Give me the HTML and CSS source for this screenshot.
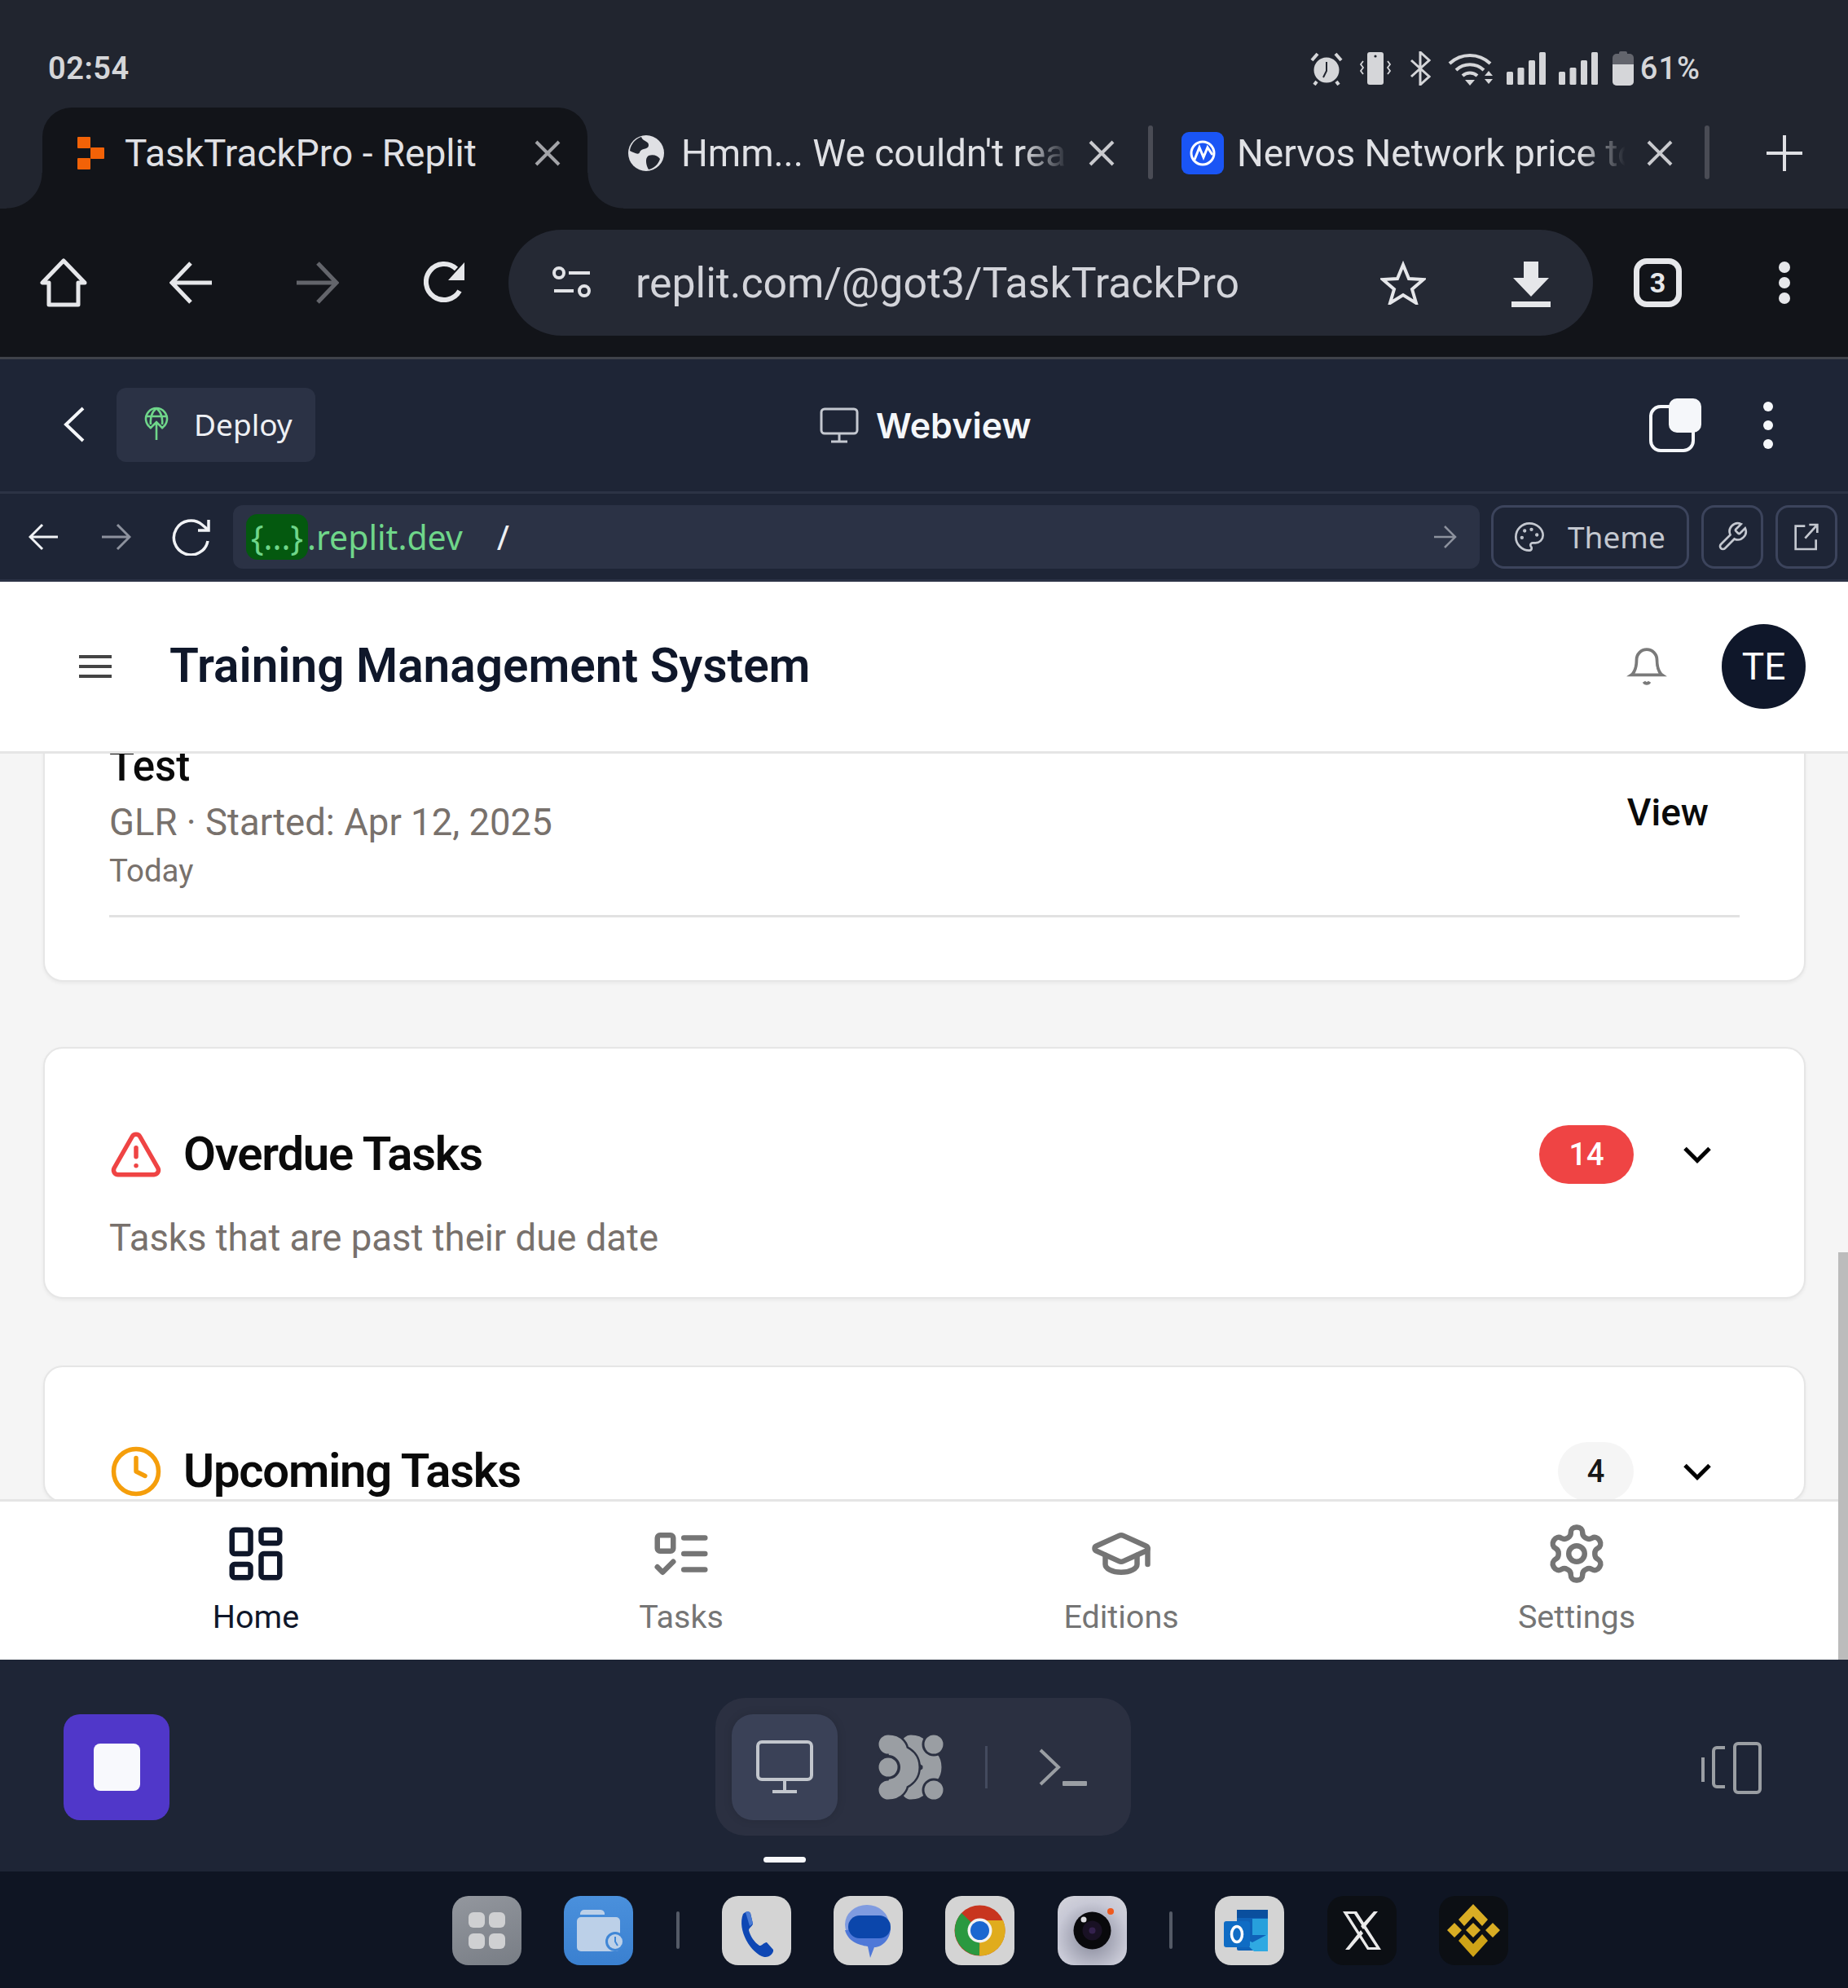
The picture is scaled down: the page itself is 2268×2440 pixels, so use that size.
FILE: index.html
```html
<!DOCTYPE html>
<html lang="en">
<head>
    <meta charset="UTF-8">
    <title>TaskTrackPro - Replit</title>
    <link rel="stylesheet" href="styles.css">
</head>
<body>
<div class="screen">

    <!-- phone status bar -->
    <div class="statusbar">
        <span class="time">02:54</span>
        <div class="status-icons">
            <svg class="st-alarm" viewBox="0 0 40 42"><circle cx="20" cy="23" r="15.500" fill="#d5d6d9"/><path d="M2 11 9 3M38 11 31 3M8 37l-3 4M32 37l3 4" stroke="#d5d6d9" stroke-width="4" fill="none"/><path d="M20 13v11l-4 8" stroke="#21252f" stroke-width="2" fill="none"/></svg>
            <svg class="st-vib" viewBox="0 0 40 42"><rect x="10" y="1" width="20" height="40" rx="3" fill="#d5d6d9"/><circle cx="20" cy="6" r="1.600" fill="#21252f"/><path d="M5 12l-3 4 3 4-3 4 3 4M35 12l3 4-3 4 3 4-3 4" stroke="#d5d6d9" stroke-width="1.800" fill="none"/></svg>
            <svg class="st-bt" viewBox="0 0 26 42"><path d="M2 11l22 20-11 10V1l11 10L2 31" stroke="#d5d6d9" stroke-width="3" fill="none"/></svg>
            <svg class="st-wifi" viewBox="0 0 56 42"><path d="M2 15a36 36 0 0 1 50 0M10 23a25 25 0 0 1 34 0M18 30a13 13 0 0 1 18 0" stroke="#d5d6d9" stroke-width="4" fill="none"/><path d="M21 35h12l-6 7z" fill="#d5d6d9"/><path d="M50 24l5 6H45zM45 34h10l-5 6z" fill="#d5d6d9"/></svg>
            <svg class="st-sig" viewBox="0 0 48 40"><g fill="#d5d6d9"><rect x="0" y="24" width="8" height="16" rx="1.500"/><rect x="13.500" y="19" width="8" height="21" rx="1.500"/><rect x="27" y="10" width="8" height="30" rx="1.500"/><rect x="40" y="0" width="8" height="40" rx="1.500"/></g></svg>
            <svg class="st-sig" viewBox="0 0 48 40"><g fill="#d5d6d9"><rect x="0" y="24" width="8" height="16" rx="1.500"/><rect x="13.500" y="19" width="8" height="21" rx="1.500"/><rect x="27" y="10" width="8" height="30" rx="1.500"/><rect x="40" y="0" width="8" height="40" rx="1.500"/></g></svg>
            <svg class="st-batt" viewBox="0 0 26 42"><rect x="0" y="3" width="26" height="39" rx="5" fill="#63656d"/><rect x="8" y="0" width="10" height="5" rx="2" fill="#63656d"/><path d="M0 16h26v21a5 5 0 0 1-5 5H5a5 5 0 0 1-5-5z" fill="#d5d6d9"/></svg>
            <span class="batt-text">61%</span>
        </div>
    </div>

    <!-- chrome tabs -->
    <div class="tabstrip">
        <div class="tab tab-active">
            <svg class="fav-replit" viewBox="0 0 33 40"><g fill="#f26207"><rect x="0" y="0" width="16" height="14" rx="1"/><rect x="16" y="13" width="17" height="14" rx="1"/><rect x="0" y="26" width="16" height="14" rx="1"/></g></svg>
            <span class="tab-title">TaskTrackPro - Replit</span>
            <svg class="tab-x" viewBox="0 0 34 34"><path d="M3 3l28 28M31 3 3 31" stroke="#a3a4a8" stroke-width="4"/></svg>
        </div>
        <div class="tab tab-two">
            <svg class="fav-globe" viewBox="0 0 44 44"><circle cx="22" cy="22" r="22" fill="#dfe0e4"/><path d="M16 2c2 6 10 5 9 11-1 5-9 2-11 8-1 4-8 0-12-2 1-8 7-15 14-17zM25 25c6-2 11 0 14 4-2 7-8 12-14 13-3-5-5-14 0-17z" fill="#21252f"/></svg>
            <span class="tab-title tab-fade">Hmm... We couldn't reach this page</span>
            <svg class="tab-x" viewBox="0 0 34 34"><path d="M3 3l28 28M31 3 3 31" stroke="#c9cace" stroke-width="4"/></svg>
        </div>
        <i class="tab-sep"></i>
        <div class="tab tab-three">
            <svg class="fav-cmc" viewBox="0 0 52 52"><rect width="52" height="52" rx="9" fill="#1a55f5"/><circle cx="26" cy="26" r="14" fill="none" stroke="#fff" stroke-width="3"/><path d="M16 34l6-15 5 12 5-12 6 9" fill="none" stroke="#fff" stroke-width="3"/></svg>
            <span class="tab-title tab-fade">Nervos Network price today</span>
            <svg class="tab-x" viewBox="0 0 34 34"><path d="M3 3l28 28M31 3 3 31" stroke="#c9cace" stroke-width="4"/></svg>
        </div>
        <i class="tab-sep"></i>
        <svg class="tab-plus" viewBox="0 0 44 44"><path d="M22 0v44M0 22h44" stroke="#dfe0e4" stroke-width="4"/></svg>
    </div>

    <!-- chrome toolbar -->
    <div class="toolbar">
        <svg class="tb-home" viewBox="0 0 60 60"><path d="M30 3 4 30h8v27h36V30h8z" fill="none" stroke="#e6e7ea" stroke-width="5" stroke-linejoin="round"/></svg>
        <svg class="tb-arrow" viewBox="0 0 52 52"><path d="M52 26H4M26 2 3 26l23 24" fill="none" stroke="#e6e7ea" stroke-width="5"/></svg>
        <svg class="tb-arrow tb-fwd" viewBox="0 0 52 52"><path d="M0 26h48M26 2l23 24-23 24" fill="none" stroke="#63656b" stroke-width="5"/></svg>
        <svg class="tb-reload" viewBox="0 0 52 52"><path d="M44 36A22 22 0 1 1 40 9" fill="none" stroke="#e6e7ea" stroke-width="6"/><path d="M50 1v22H30z" fill="#e6e7ea"/></svg>
        <div class="urlpill">
            <svg class="tune" viewBox="0 0 48 42"><g fill="none" stroke="#e2e3e7" stroke-width="4"><circle cx="8" cy="9" r="6"/><path d="M20 9h26M2 31h24"/><circle cx="39" cy="31" r="6"/></g></svg>
            <span class="urltext">replit.com/@got3/TaskTrackPro</span>
            <svg class="star" viewBox="0 0 56 54"><path d="M28 5l7 17 18 1-14 12 5 17-16-10-16 10 5-17L3 23l18-1z" fill="none" stroke="#e6e7ea" stroke-width="4"/></svg>
            <svg class="dl" viewBox="0 0 48 56"><path d="M15 0h18v20h13L24 43 2 20h13z" fill="#e6e7ea"/><rect y="49" width="48" height="7" fill="#e6e7ea"/></svg>
        </div>
        <div class="tabcount">3</div>
        <svg class="tb-kebab" viewBox="0 0 16 52"><g fill="#e6e7ea"><circle cx="8" cy="7" r="7"/><circle cx="8" cy="26" r="7"/><circle cx="8" cy="45" r="7"/></g></svg>
    </div>

    <!-- replit mobile header -->
    <div class="replit-head">
        <svg class="rh-back" viewBox="0 0 26 44"><path d="M24 2 3 22l21 20" fill="none" stroke="#f5f7fa" stroke-width="4"/></svg>
        <div class="deploy">
            <svg class="deploy-ico" viewBox="0 0 30 42"><g fill="none" stroke="#6fd68a" stroke-width="2.600"><path d="M8 26a13 13 0 1 1 14 0"/><path d="M2 12h26M15 2c-6 5-8 11-7 20M15 2c6 5 8 11 7 20M15 41V19M7 27l8-8 8 8"/></g></svg>
            <span>Deploy</span>
        </div>
        <div class="rh-center">
            <svg class="rh-monitor" viewBox="0 0 48 44"><rect x="2" y="2" width="44" height="30" rx="4" fill="none" stroke="#c4c8d0" stroke-width="3"/><path d="M24 32v9M14 42h20" stroke="#c4c8d0" stroke-width="3"/></svg>
            <span>Webview</span>
        </div>
        <svg class="rh-copy" viewBox="0 0 64 66"><rect x="2" y="10" width="52" height="54" rx="12" fill="none" stroke="#f5f7fa" stroke-width="4"/><rect x="24" y="0" width="40" height="42" rx="10" fill="#f5f7fa"/></svg>
        <svg class="rh-kebab" viewBox="0 0 14 58"><g fill="#f5f7fa"><circle cx="7" cy="6" r="6"/><circle cx="7" cy="29" r="6"/><circle cx="7" cy="52" r="6"/></g></svg>
    </div>

    <!-- webview url bar -->
    <div class="webbar">
        <svg class="wb-arrow" viewBox="0 0 36 36"><path d="M36 18H3M17 3 2 18l15 15" fill="none" stroke="#f1f3f6" stroke-width="3"/></svg>
        <svg class="wb-arrow wb-fwd" viewBox="0 0 36 36"><path d="M0 18h33M19 3l15 15-15 15" fill="none" stroke="#8d929e" stroke-width="3"/></svg>
        <svg class="wb-reload" viewBox="0 0 48 46"><path d="M44 28A21 21 0 1 1 37 8l7 6" fill="none" stroke="#f1f3f6" stroke-width="3.500"/><path d="M45 2v13H32" fill="none" stroke="#f1f3f6" stroke-width="3.500"/></svg>
        <div class="wb-url">
            <span class="wb-slug">{...}</span><span class="wb-host">.replit.dev</span>
            <span class="wb-slash">/</span>
            <svg class="wb-go" viewBox="0 0 28 32"><path d="M0 16h25M13 3l13 13-13 13" fill="none" stroke="#8d929e" stroke-width="2.500"/></svg>
        </div>
        <div class="wb-btn wb-theme">
            <svg class="wb-ico" viewBox="0 0 24 24" fill="none" stroke="#c4c8d0" stroke-width="1.600"><circle cx="13.500" cy="6.500" r=".5" fill="#c4c8d0"/><circle cx="17.500" cy="10.500" r=".5" fill="#c4c8d0"/><circle cx="8.500" cy="7.500" r=".5" fill="#c4c8d0"/><circle cx="6.500" cy="12.500" r=".5" fill="#c4c8d0"/><path d="M12 2C6.500 2 2 6.500 2 12s4.500 10 10 10c.926 0 1.648-.746 1.648-1.688 0-.437-.18-.835-.437-1.125-.29-.289-.438-.652-.438-1.125a1.64 1.64 0 0 1 1.668-1.668h1.996c3.051 0 5.555-2.503 5.555-5.554C21.965 6.012 17.461 2 12 2z"/></svg>
            <span>Theme</span>
        </div>
        <div class="wb-btn wb-square">
            <svg class="wb-ico" viewBox="0 0 24 24" fill="none" stroke="#c4c8d0" stroke-width="1.600"><path d="M14.700 6.300a1 1 0 0 0 0 1.400l1.600 1.600a1 1 0 0 0 1.400 0l3.770-3.770a6 6 0 0 1-7.940 7.940l-6.910 6.910a2.120 2.120 0 0 1-3-3l6.910-6.910a6 6 0 0 1 7.940-7.940l-3.760 3.760z"/></svg>
        </div>
        <div class="wb-btn wb-square">
            <svg class="wb-ico" viewBox="0 0 24 24" fill="none" stroke="#c4c8d0" stroke-width="1.600"><path d="M11 4H4v17h15v-7M20 3 11 13M14 3h6v6"/></svg>
        </div>
    </div>

    <!-- the app in the webview -->
    <div class="app">
        <header class="app-head">
            <svg class="menu" viewBox="0 0 40 30"><path d="M0 3h40M0 15h40M0 27h40" stroke="#444" stroke-width="4"/></svg>
            <h1>Training Management System</h1>
            <svg class="bell" viewBox="0 0 24 24" fill="none" stroke="#7a7a7a" stroke-width="1.800"><path d="M6 8a6 6 0 0 1 12 0c0 7 3 9 3 9H3s3-2 3-9"/><path d="M10.300 21a1.940 1.940 0 0 0 3.400 0"/></svg>
            <div class="avatar">TE</div>
        </header>

        <main class="scroller">
            <div class="scroll-inner">
                <section class="card card-recent">
                    <div class="recent-row">
                        <div>
                            <div class="recent-name">Test</div>
                            <div class="recent-meta">GLR · Started: Apr 12, 2025</div>
                            <div class="recent-date">Today</div>
                        </div>
                        <span class="view-link">View</span>
                    </div>
                </section>

                <section class="card card-overdue">
                    <div class="card-top">
                        <svg class="card-ico" viewBox="0 0 24 24" fill="none" stroke="#ef4444" stroke-width="2" stroke-linecap="round" stroke-linejoin="round"><path d="m21.730 18-8-14a2 2 0 0 0-3.480 0l-8 14A2 2 0 0 0 4 21h16a2 2 0 0 0 1.730-3"/><path d="M12 9v4"/><path d="M12 17h.01"/></svg>
                        <h2>Overdue Tasks</h2>
                        <span class="badge badge-red">14</span>
                        <svg class="chev" viewBox="0 0 24 24" fill="none" stroke="#000" stroke-width="2"><path d="m6 9 6 6 6-6"/></svg>
                    </div>
                    <p class="card-sub">Tasks that are past their due date</p>
                </section>

                <section class="card">
                    <div class="card-top">
                        <svg class="card-ico" viewBox="0 0 24 24" fill="none" stroke="#f59e0b" stroke-width="2" stroke-linecap="round" stroke-linejoin="round"><circle cx="12" cy="12" r="10"/><polyline points="12 6 12 12 16 14"/></svg>
                        <h2>Upcoming Tasks</h2>
                        <span class="badge badge-grey">4</span>
                        <svg class="chev" viewBox="0 0 24 24" fill="none" stroke="#000" stroke-width="2"><path d="m6 9 6 6 6-6"/></svg>
                    </div>
                </section>
            </div>
        </main>

        <nav class="tabbar">
            <div class="nav-item nav-on">
                <svg viewBox="0 0 24 24" fill="none" stroke="#0f172a" stroke-width="2"><rect x="3" y="3" width="7" height="9" rx="1"/><rect x="14" y="3" width="7" height="5" rx="1"/><rect x="14" y="12" width="7" height="9" rx="1"/><rect x="3" y="16" width="7" height="5" rx="1"/></svg>
                <span>Home</span>
            </div>
            <div class="nav-item">
                <svg viewBox="0 0 24 24" fill="none" stroke="#757575" stroke-width="2" stroke-linecap="round" stroke-linejoin="round"><rect x="3" y="5" width="6" height="6" rx="1"/><path d="m3 17 2 2 4-4"/><path d="M13 6h8"/><path d="M13 12h8"/><path d="M13 18h8"/></svg>
                <span>Tasks</span>
            </div>
            <div class="nav-item">
                <svg viewBox="0 0 24 24" fill="none" stroke="#757575" stroke-width="2" stroke-linecap="round" stroke-linejoin="round"><path d="M21.420 10.922a1 1 0 0 0-.019-1.838L12.830 5.180a2 2 0 0 0-1.660 0L2.600 9.080a1 1 0 0 0 0 1.832l8.570 3.908a2 2 0 0 0 1.660 0z"/><path d="M22 10v6"/><path d="M6 12.500V16a6 3 0 0 0 12 0v-3.500"/></svg>
                <span>Editions</span>
            </div>
            <div class="nav-item">
                <svg viewBox="0 0 24 24" fill="none" stroke="#757575" stroke-width="2" stroke-linecap="round" stroke-linejoin="round"><path d="M12.220 2h-.44a2 2 0 0 0-2 2v.18a2 2 0 0 1-1 1.730l-.43.25a2 2 0 0 1-2 0l-.15-.08a2 2 0 0 0-2.730.73l-.22.38a2 2 0 0 0 .73 2.730l.15.1a2 2 0 0 1 1 1.720v.51a2 2 0 0 1-1 1.740l-.15.09a2 2 0 0 0-.73 2.730l.22.38a2 2 0 0 0 2.730.73l.15-.08a2 2 0 0 1 2 0l.43.25a2 2 0 0 1 1 1.730V20a2 2 0 0 0 2 2h.44a2 2 0 0 0 2-2v-.18a2 2 0 0 1 1-1.730l.43-.25a2 2 0 0 1 2 0l.15.08a2 2 0 0 0 2.730-.73l.22-.39a2 2 0 0 0-.73-2.730l-.15-.08a2 2 0 0 1-1-1.740v-.5a2 2 0 0 1 1-1.740l.15-.09a2 2 0 0 0 .73-2.730l-.22-.38a2 2 0 0 0-2.730-.73l-.15.08a2 2 0 0 1-2 0l-.43-.25a2 2 0 0 1-1-1.730V4a2 2 0 0 0-2-2z"/><circle cx="12" cy="12" r="3"/></svg>
                <span>Settings</span>
            </div>
        </nav>
        <div class="scrollthumb"></div>
    </div>

    <!-- replit bottom bar -->
    <div class="ide-bar">
        <div class="stop"><i></i></div>
        <div class="ide-mid">
            <div class="ide-pill">
                <div class="ide-tab ide-tab-on">
                    <svg class="ide-monitor" viewBox="0 0 70 66"><rect x="2" y="2" width="66" height="46" rx="5" fill="none" stroke="#c2c6cd" stroke-width="4"/><path d="M35 48v14M20 63h30" stroke="#c2c6cd" stroke-width="4"/></svg>
                </div>
                <div class="ide-tab">
                    <svg class="ide-agent" viewBox="0 0 80 80" fill="none" stroke-linecap="round">
                        <path d="M40 12C50 12 52 18 52 22 53 27 66 26 66 40 66 54 53 53 52 58 52 62 50 68 40 68" stroke="#9a9ea3" stroke-width="23"/>
                        <path d="M12 12C22 12 24 18 24 22 25 27 38 26 38 40 38 54 25 53 24 58 24 62 22 68 12 68" stroke="#2b3041" stroke-width="28"/>
                        <path d="M12 12C22 12 24 18 24 22 25 27 38 26 38 40 38 54 25 53 24 58 24 62 22 68 12 68" stroke="#9a9ea3" stroke-width="23"/>
                        <circle cx="12" cy="40" r="15" fill="#2b3041"/>
                        <circle cx="12" cy="40" r="11.500" fill="#9a9ea3"/>
                        <circle cx="68" cy="12" r="14.500" fill="#2b3041"/>
                        <circle cx="68" cy="12" r="11.500" fill="#9a9ea3"/>
                        <circle cx="68" cy="68" r="14.500" fill="#2b3041"/>
                        <circle cx="68" cy="68" r="11.500" fill="#9a9ea3"/>
                    </svg>
                </div>
                <i class="ide-sep"></i>
                <svg class="ide-term" viewBox="0 0 60 46"><path d="M2 2l22 21L2 44" fill="none" stroke="#9a9ea3" stroke-width="4"/><rect x="29" y="40" width="30" height="6" rx="1" fill="#9a9ea3"/></svg>
            </div>
            <div class="ide-indicator"></div>
        </div>
        <svg class="ide-devices" viewBox="0 0 74 64"><path d="M2 19v30" stroke="#9a9ea3" stroke-width="4"/><path d="M29 7H19a4 4 0 0 0-4 4v40a4 4 0 0 0 4 4h10" fill="none" stroke="#9a9ea3" stroke-width="4"/><rect x="41" y="2" width="31" height="60" rx="4" fill="none" stroke="#9a9ea3" stroke-width="4"/></svg>
    </div>

    <!-- samsung dock -->
    <div class="dock">
        <div class="app-ico ico-grid">
            <svg viewBox="0 0 85 85"><g fill="#cfd0d2"><rect x="20" y="20" width="20" height="19" rx="6"/><rect x="45" y="20" width="20" height="19" rx="6"/><rect x="20" y="46" width="20" height="19" rx="6"/><rect x="45" y="46" width="20" height="19" rx="6"/></g></svg>
        </div>
        <div class="app-ico ico-files">
            <svg viewBox="0 0 85 85"><path d="M20 22a5 5 0 0 1 5-5h20a5 5 0 0 1 5 6H20z" fill="#bcd0e8"/><rect x="16" y="26" width="53" height="42" rx="5" fill="#bcd0e8"/><circle cx="63" cy="56" r="12" fill="#3f86d6"/><circle cx="63" cy="56" r="9" fill="#bcd0e8"/><path d="M63 50v6l3 5" stroke="#3f86d6" stroke-width="2" fill="none"/></svg>
        </div>
        <i class="dock-sep"></i>
        <div class="app-ico ico-light">
            <svg viewBox="0 0 85 85"><path d="M26 22c3-3 7-4 9-1l3 13c0 3-5 5-5 8 2 8 7 15 13 19 2 1 7-5 9-4l8 9c1 4-5 10-11 9C36 71 18 42 26 22z" fill="#0e47b4"/><path d="M29 20c3-2 5-1 6 2l3 12-4 3z" fill="#4a7bd4"/></svg>
        </div>
        <div class="app-ico ico-light">
            <svg viewBox="0 0 85 85"><ellipse cx="41" cy="35" rx="27" ry="24" fill="#7f9be0"/><path d="M14 42c4 14 16 18 28 20l3 14 5-13c10 0 20-10 20-24z" fill="#4f78d8"/><rect x="18" y="24" width="52" height="28" rx="14" fill="#0b46ab"/></svg>
        </div>
        <div class="app-ico ico-light">
            <svg viewBox="0 0 85 85"><circle cx="42.500" cy="42.500" r="31" fill="#c8351f"/><path d="M42.500 42.500 20 21a31 31 0 0 0 22 52z" fill="#2a9940"/><path d="M42.500 42.500 42 73.500A31 31 0 0 0 71 30H42z" fill="#e0ac1d"/><circle cx="42.500" cy="42.500" r="15" fill="#f2f2f2"/><circle cx="42.500" cy="42.500" r="11.500" fill="#1a67d0"/></svg>
        </div>
        <div class="app-ico ico-cam">
            <svg viewBox="0 0 85 85"><circle cx="42.500" cy="42.500" r="23" fill="#09090c"/><circle cx="42.500" cy="42.500" r="12" fill="#191124"/><circle cx="42.500" cy="42.500" r="4" fill="#34214d"/><circle cx="32" cy="29" r="3.500" fill="#dcdce0"/><circle cx="65" cy="19" r="4" fill="#ef5a1e"/></svg>
        </div>
        <i class="dock-sep"></i>
        <div class="app-ico ico-light">
            <svg viewBox="0 0 85 85"><rect x="27" y="17" width="38" height="50" rx="2" fill="#0f62b8"/><rect x="46" y="28" width="19" height="20" fill="#27a0dc"/><rect x="27" y="17" width="38" height="10" fill="#0a4f9e"/><path d="M27 48l21 20h17V47L46 57z" fill="#2fa9e2"/><rect x="11" y="31" width="32" height="32" rx="3" fill="#0f6cc4"/><ellipse cx="27" cy="47" rx="6.500" ry="9.500" fill="none" stroke="#fff" stroke-width="3.500"/></svg>
        </div>
        <div class="app-ico ico-dark">
            <svg viewBox="0 0 85 85"><path d="M19 19h17l30 47H49zM25 22l26 41h9L33 22z" fill="#eaeaea" fill-rule="evenodd"/><path d="M62 19h-5L41 37l3 4zM22 66h5l17-20-3-4z" fill="#eaeaea"/></svg>
        </div>
        <div class="app-ico ico-dark">
            <svg viewBox="0 0 85 85"><g fill="#d9ad24"><path d="M42 10l18 19-7 8-11-12-11 12-7-8z"/><path d="M42 33l9 9-9 9-9-9z"/><path d="M19 33l9 9-9 9-9-9zM66 33l9 9-9 9-9-9z"/><path d="M31 47l11 12 11-12 7 8-18 20-18-20z" fill="#cfa317"/></g></svg>
        </div>
    </div>

</div>
</body>
</html>
```

FILE: styles.css
```css
* { box-sizing: border-box; }
html, body { margin: 0; padding: 0; }
body { width: 2268px; height: 2440px; overflow: hidden; font-family: Roboto, "Noto Sans", sans-serif; }
svg { display: block; flex: none; }
h1, h2, p { margin: 0; }

.screen { width: 2268px; height: 2440px; display: flex; flex-direction: column; overflow: hidden; }

/* status bar */
.statusbar { height: 132px; background: #21252f; display: flex; align-items: flex-start; padding: 62px 181px 0 59px; color: #d5d6d9; }
.time { font-size: 38px; font-weight: 600; line-height: 44px; letter-spacing: .5px; }
.status-icons { margin-left: auto; display: flex; align-items: center; height: 44px; }
.st-alarm { width: 40px; height: 42px; }
.st-vib { width: 40px; height: 42px; margin-left: 20px; }
.st-bt { width: 26px; height: 42px; margin-left: 22px; }
.st-wifi { width: 56px; height: 42px; margin-left: 21px; }
.st-sig { width: 48px; height: 40px; margin-left: 16px; }
.st-batt { width: 26px; height: 42px; margin-left: 18px; }
.batt-text { font-size: 38px; font-weight: 500; margin-left: 8px; letter-spacing: 1px; }

/* tabs */
.tabstrip { height: 124px; background: #21252f; display: flex; align-items: flex-start; position: relative; color: #e0e1e5; }
.tab { height: 124px; display: flex; align-items: center; padding-bottom: 12px; font-size: 46px; flex: none; }
.tab-active { width: 669px; margin-left: 52px; padding-left: 43px; background: #121419; border-radius: 36px 36px 0 0; position: relative; }
.tab-active::before, .tab-active::after { content: ""; position: absolute; bottom: 0; width: 44px; height: 44px; }
.tab-active::before { left: -44px; background: radial-gradient(circle at 0 0, #21252f 43px, #121419 44px); }
.tab-active::after { right: -44px; background: radial-gradient(circle at 100% 0, #21252f 43px, #121419 44px); }
.tab-title { white-space: nowrap; overflow: hidden; display: block; line-height: 60px; }
.tab-fade { -webkit-mask-image: linear-gradient(to right, #000 88%, transparent 100%); mask-image: linear-gradient(to right, #000 88%, transparent 100%); }
.fav-replit { width: 33px; height: 40px; margin-right: 25px; }
.tab-active .tab-title { width: 502px; }
.tab-x { width: 34px; height: 34px; }
.tab-two { width: 688px; padding-left: 50px; }
.fav-globe { width: 44px; height: 44px; margin-right: 21px; }
.tab-two .tab-title { width: 475px; margin-right: 24px; }
.tab-three { width: 677px; padding-left: 35px; }
.fav-cmc { width: 52px; height: 52px; margin-right: 16px; }
.tab-three .tab-title { width: 477px; margin-right: 25px; }
.tab-sep { width: 6px; height: 66px; margin-top: 22px; background: #4a4c55; border-radius: 3px; flex: none; }
.tab-plus { width: 44px; height: 44px; margin: 34px 0 0 70px; }

/* toolbar */
.toolbar { height: 185px; background: #121419; border-bottom: 3px solid #3f424a; display: flex; align-items: center; padding: 0 0 0 48px; position: relative; }
.tb-home { width: 60px; height: 60px; }
.tb-arrow { width: 52px; height: 52px; margin-left: 100px; }
.tb-fwd { margin-left: 104px; }
.tb-reload { width: 52px; height: 52px; margin-left: 104px; }
.urlpill { width: 1331px; height: 130px; margin-left: 52px; background: #252934; border-radius: 65px; display: flex; align-items: center; padding-left: 54px; flex: none; }
.tune { width: 48px; height: 42px; }
.urltext { font-size: 51.800px; color: #d3d4da; margin-left: 54px; width: 914px; white-space: nowrap; }
.star { width: 56px; height: 54px; }
.dl { width: 48px; height: 56px; margin-left: 105px; margin-top: 3px; }
.tabcount { width: 59px; height: 60px; margin-left: 50px; border: 7px solid #e6e7ea; border-radius: 16px; color: #e6e7ea; font-size: 34px; font-weight: 700; display: flex; align-items: center; justify-content: center; flex: none; }
.tb-kebab { width: 16px; height: 52px; margin-left: 118px; }

/* replit header */
.replit-head { height: 165px; background: #1e2536; border-bottom: 3px solid #2c3345; display: flex; align-items: center; position: relative; color: #f5f7fa; padding: 0 0 0 78px; }
.rh-back { width: 26px; height: 44px; margin-top: -2px; }
.deploy { width: 244px; height: 91px; margin-left: 39px; margin-top: -2px; background: #2b3245; border-radius: 12px; display: flex; align-items: center; padding-left: 34px; padding-bottom: 2px; font: 400 37px "Noto Sans", sans-serif; color: #eef0f4; flex: none; }
.deploy-ico { width: 30px; height: 42px; margin-right: 31px; }
.rh-center { display: flex; align-items: center; margin-left: 619px; font: 600 43px Inter, sans-serif; }
.rh-monitor { width: 48px; height: 44px; margin-right: 21px; }
.rh-copy { width: 64px; height: 66px; margin-left: 758px; }
.rh-kebab { width: 14px; height: 58px; margin-left: 75px; }

/* webview bar */
.webbar { height: 108px; background: #1e2536; border-bottom: 3px solid #2b3245; display: flex; align-items: center; padding: 0 0 0 35px; }
.wb-arrow { width: 36px; height: 36px; }
.wb-fwd { margin-left: 54px; }
.wb-reload { width: 48px; height: 46px; margin-left: 50px; }
.wb-url { width: 1530px; height: 78px; margin-left: 27px; background: #2b3245; border-radius: 12px; display: flex; align-items: center; padding-left: 16px; font: 400 41px "Noto Sans", sans-serif; color: #6fd68a; flex: none; }
.wb-slug { width: 76px; height: 56px; background: #04590f; border-radius: 14px; display: flex; align-items: center; justify-content: center; }
.wb-host { margin-left: -1px; }
.wb-slash { color: #eef0f4; margin-left: 42px; }
.wb-go { width: 28px; height: 32px; margin-left: auto; margin-right: 28px; }
.wb-btn { height: 78px; margin-left: 15px; border: 3px solid #3c445c; border-radius: 16px; display: flex; align-items: center; justify-content: center; color: #c4c8d0; font: 400 37px "Noto Sans", sans-serif; flex: none; }
.wb-theme { width: 243px; justify-content: flex-start; padding-left: 24px; margin-left: 14px; }
.wb-theme span { margin-left: 27px; }
.wb-square { width: 76px; }
.wb-ico { width: 40px; height: 40px; }

/* app */
.app { height: 1323px; display: flex; flex-direction: column; position: relative; background: #fff; }
.app-head { height: 211px; background: #fff; border-bottom: 3px solid #e5e5e5; display: flex; align-items: center; padding: 0 52px 0 97px; flex: none; position: relative; z-index: 2; }
.menu { width: 40px; height: 30px; }
h1 { font-size: 58.500px; font-weight: 600; color: #0f172a; margin-left: 71px; margin-top: -2px; }
.bell { width: 50px; height: 50px; margin-left: auto; margin-right: 2px; }
.avatar { width: 103px; height: 104px; border-radius: 50%; background: #0f172a; color: #fff; font-size: 46px; display: flex; align-items: center; justify-content: center; margin-left: 65px; }

.scroller { height: 915px; background: #f5f5f5; overflow: hidden; flex: none; }
.scroll-inner { padding: 0 52px 0 53px; margin-top: -60px; }
.card { background: #fff; border: 2px solid #e6e6e6; border-radius: 24px; box-shadow: 0 2px 4px rgba(0,0,0,.05); padding: 0 79px 0 79px; margin-bottom: 82px; }
.card-recent { height: 340px; margin-bottom: 80px; }
.recent-row { display: flex; align-items: center; justify-content: space-between; padding: 44px 38px 26px 0; border-bottom: 3px solid #e2e2e2; height: 259px; }
.recent-name { font-size: 51px; font-weight: 500; color: #0a0a0a; line-height: 60px; margin-top: -3px; margin-bottom: 3px; }
.recent-meta { font-size: 45.500px; color: #78716c; line-height: 60px; margin-top: 9px; }
.recent-date { font-size: 38.400px; color: #78716c; line-height: 50px; margin-top: 4px; }
.view-link { font-size: 46px; font-weight: 500; color: #0a0a0a; margin-top: -14px; }

.card-top { display: flex; align-items: center; height: 72px; margin-top: 92px; }
.card-overdue .card-top { margin-top: 94px; }
.card-ico { width: 66px; height: 66px; }
h2 { font-size: 58px; font-weight: 600; color: #0a0a0a; margin-left: 25px; margin-top: -3px; letter-spacing: -1.200px; }
.badge { height: 72px; border-radius: 36px; margin-left: auto; display: flex; align-items: center; justify-content: center; font-size: 38px; font-weight: 500; }
.badge-red { width: 116px; background: #ef4444; color: #fff; }
.badge-grey { width: 93px; background: #f5f5f5; color: #171717; }
.chev { width: 60px; height: 60px; margin-left: 48px; margin-right: 22px; }
.card-sub { font-size: 45.500px; color: #78716c; margin-top: 37px; line-height: 60px; padding-bottom: 42px; }

.tabbar { height: 197px; background: #fff; border-top: 3px solid #e5e5e5; display: grid; grid-template-columns: 628px 416px 664px 454px; flex: none; position: relative; z-index: 2; }
.nav-item { display: flex; flex-direction: column; align-items: center; padding-top: 25px; color: #757575; font-size: 39.500px; }
.nav-item svg { width: 78px; height: 78px; }
.nav-item span { line-height: 48px; margin-top: 15px; }
.nav-on { color: #0f172a; }
.scrollthumb { position: absolute; right: 0; bottom: 0; width: 12px; height: 500px; background: #bcbcbc; z-index: 3; }

/* replit bottom bar */
.ide-bar { height: 260px; background: #1e2536; display: flex; align-items: flex-start; padding: 67px 0 0 78px; }
.stop { width: 130px; height: 130px; background: #5037c9; border-radius: 20px; display: flex; align-items: center; justify-content: center; flex: none; }
.stop i { width: 57px; height: 58px; background: #f8f9fd; border-radius: 8px; }
.ide-mid { margin-left: 670px; margin-top: -20px; display: flex; flex-direction: column; align-items: stretch; }
.ide-pill { width: 510px; height: 169px; background: #2b3041; border-radius: 36px; display: flex; align-items: center; padding-left: 20px; }
.ide-tab { width: 130px; height: 130px; border-radius: 26px; display: flex; align-items: center; justify-content: center; flex: none; }
.ide-tab-on { background: #3a4157; box-shadow: 0 0 12px rgba(0,0,0,.12); }
.ide-monitor { width: 70px; height: 66px; }
.ide-agent { width: 80px; height: 80px; margin-left: 50px; }
.ide-sep { width: 3px; height: 52px; margin-left: 51px; background: #434a5e; flex: none; }
.ide-term { width: 60px; height: 46px; margin-left: 63px; }
.ide-indicator { width: 52px; height: 7px; background: #f8f9fd; border-radius: 4px; margin: 26px 0 0 59px; }
.ide-devices { width: 74px; height: 64px; margin: 34px 0 0 700px; }

/* dock */
.dock { height: 143px; background: #0f1523; display: flex; align-items: center; padding: 1px 0 0 555px; gap: 52.300px; }
.app-ico { width: 85px; height: 85px; border-radius: 20px; overflow: hidden; flex: none; }
.app-ico svg { width: 85px; height: 85px; }
.ico-grid { background: linear-gradient(160deg, #93979e, #787d85); }
.ico-files { background: linear-gradient(#4a90dc, #3a80d0); }
.ico-light { background: #d4d4d4; }
.ico-cam { background: radial-gradient(circle at 50% 60%, #8d8fa0 10%, #c8c9d6 65%, #d6d6dc); }
.ico-dark { background: #0c0f14; }
.dock-sep { width: 4px; height: 46px; background: #545a66; border-radius: 2px; flex: none; }
```
